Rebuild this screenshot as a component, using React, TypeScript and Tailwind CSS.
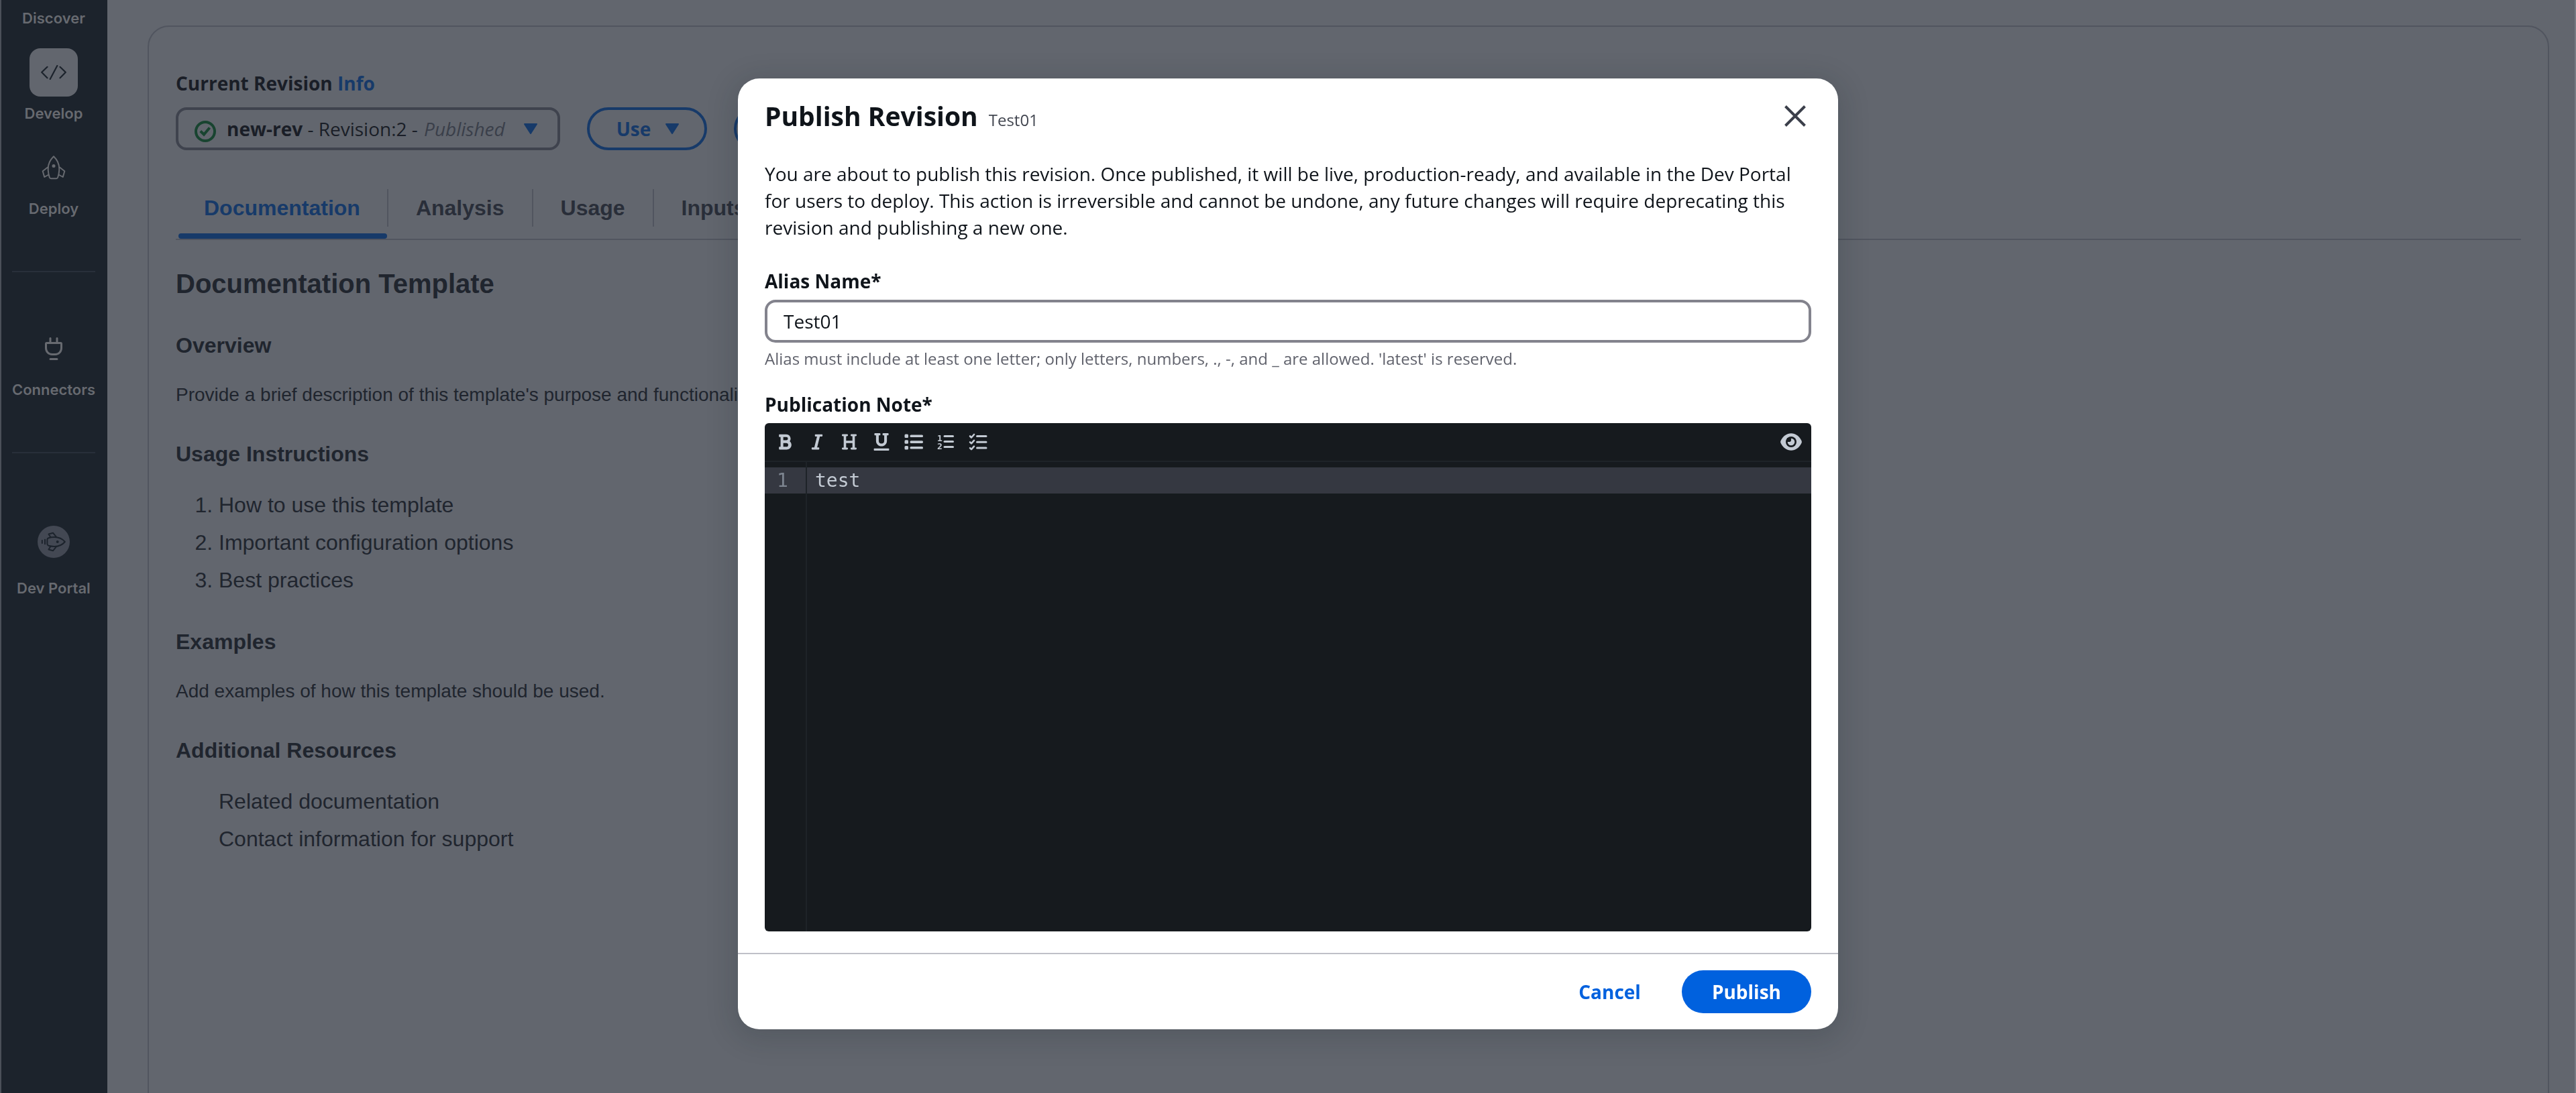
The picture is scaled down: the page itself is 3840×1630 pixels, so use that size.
import React from 'react';
import { FaBold, FaItalic, FaUnderline } from 'react-icons/fa';
import { clsx } from 'clsx';

const tabs = ['Documentation', 'Analysis', 'Usage', 'Inputs'];

function CodeIcon() {
  return (
    <svg width="38" height="22" viewBox="0 0 38 22" fill="none" stroke="#1c232c" strokeWidth="2.2" strokeLinecap="round" strokeLinejoin="round">
      <path d="M9.5 2.8 1.2 10.8l8.3 8.4M28.5 2.8l8.3 8-8.3 8.4M24.3 1 13.7 21" />
    </svg>
  );
}

function RocketIcon() {
  return (
    <svg width="36" height="36" viewBox="0 0 36 36" fill="none" stroke="currentColor" strokeWidth="2" strokeLinejoin="round">
      <path d="M18 1.2C13 6 9.7 12 9.7 19.5c0 5 .9 9.5 2 12.8.4 1.2 1.2 1.9 2.3 1.9h8c1.1 0 1.9-.7 2.3-1.9 1.1-3.3 2-7.8 2-12.8C26.3 12 23 6 18 1.2Z" />
      <path d="M9.7 17 1.7 23.2 4.2 32l6.3-3.5M26.3 17l8 6.2-2.5 8.8-6.3-3.5" />
      <circle cx="18" cy="15.4" r="2.5" fill="currentColor" stroke="none" />
    </svg>
  );
}

function PlugIcon() {
  return (
    <svg width="28" height="34" viewBox="0 0 28 34" fill="none" stroke="currentColor" strokeWidth="3" strokeLinecap="round" strokeLinejoin="round">
      <path d="M9 1.5V8M19 1.5V8M3.500 8.500h21a1 1 0 0 1 1 1v6.500c0 5.500-4 9.500-9 9.500h-5c-5 0-9-4-9-9.500V9.500a1 1 0 0 1 1-1ZM9 32.400h10" />
    </svg>
  );
}

function PortalIcon() {
  return (
    <svg width="48" height="48" viewBox="0 0 48 48" fill="none" stroke="#1c232c" strokeWidth="2" strokeLinecap="round" strokeLinejoin="round">
      <circle cx="24" cy="24" r="24" fill="#434853" stroke="none" />
      <path d="M40.8 24C37 19.5 31.5 17 25 17c-3 0-6 .4-8.6 1.2-1.4.5-2 1.3-2 2.500v6.600c0 1.200.6 2 2 2.500C19 30.600 22 31 25 31c6.500 0 12-2.500 15.800-7Z" />
      <path d="m19.300 17-2.800-4.500 6.500-1.800 4.800 6M19.300 31l-2.800 4.500 6.500 1.800 4.800-6M11 20.700v6.600M6.800 22v4" />
      <circle cx="29.7" cy="24" r="2" fill="#1c232c" stroke="none" />
    </svg>
  );
}

function CheckCircle() {
  return (
    <svg className="mt-2 shrink-0" width="32" height="32" viewBox="0 0 32 32" fill="none" stroke="#184430" strokeWidth="4">
      <circle cx="16" cy="16" r="14" />
      <path d="m8.800 15.500 5.200 5L22.500 10.500" />
    </svg>
  );
}

function Caret() {
  return (
    <svg className="shrink-0" width="32" height="32" viewBox="0 0 32 32" fill="#173a69" stroke="#173a69" strokeWidth="2" strokeLinejoin="round">
      <path d="M7 9h18l-9 14Z" />
    </svg>
  );
}

function HeadingIcon() {
  return (
    <svg width="24" height="26" viewBox="0 0 24 26" fill="none" stroke="currentColor" strokeWidth="3.6">
      <path d="M5.500 3v20M18.500 3v20M5.500 13h13" />
      <path strokeWidth="2.800" strokeLinecap="round" d="M2.300 3h6.400M15.300 3h6.400M2.300 23h6.400M15.300 23h6.400" />
    </svg>
  );
}

function BulletListIcon() {
  return (
    <svg width="28" height="26" viewBox="0 0 28 26" fill="currentColor">
      {[1.5, 10.3, 19].map((y) => (
        <React.Fragment key={y}>
          <rect x="0.5" y={y} width="5.5" height="5.5" rx="1.5" />
          <rect x="8.5" y={y + 1} width="19.5" height="3.6" rx="1.6" />
        </React.Fragment>
      ))}
    </svg>
  );
}

function NumberListIcon() {
  return (
    <svg width="26" height="26" viewBox="0 0 26 26" fill="currentColor">
      <text x="0" y="11.5" fontSize="13" fontWeight="700" fontFamily="DejaVu Sans Mono, monospace">1</text>
      <text x="0" y="24" fontSize="13" fontWeight="700" fontFamily="DejaVu Sans Mono, monospace">2</text>
      <rect x="9.5" y="3" width="15.5" height="3" rx="1.5" />
      <rect x="9.5" y="11" width="15.5" height="3" rx="1.5" />
      <rect x="9.5" y="19" width="15.5" height="3" rx="1.5" />
    </svg>
  );
}

function TodoListIcon() {
  return (
    <svg width="28" height="26" viewBox="0 0 28 26" fill="none" stroke="currentColor" strokeWidth="3" strokeLinecap="round" strokeLinejoin="round">
      <path strokeWidth="2.6" d="m2 4.500 2 2L8 2M2 13.300l2 2 4-4.500M2 22.100l2 2 4-4.500" />
      <path d="M12.500 4.500h13.500M12.500 13.300h13.500M12.500 22.100h13.500" />
    </svg>
  );
}

function EyeIcon() {
  return (
    <svg width="32" height="26" viewBox="0 0 32 26">
      <path fill="#c3cad3" d="M16 0.200c6.500 0 12.300 4.200 15.600 11.300.4 1 .4 2 0 3C28.300 21.600 22.500 25.800 16 25.800S3.700 21.600.4 14.500c-.4-1-.4-2 0-3C3.700 4.400 9.500.2 16 .2Z" />
      <circle cx="16" cy="13" r="8" fill="#161a1e" />
      <circle cx="16" cy="13" r="5.3" fill="#c3cad3" />
      <path fill="#161a1e" d="M10 13V7h6v3.500c0 1.400-1.100 2.500-2.500 2.500Z" />
    </svg>
  );
}

const tools = [
  { label: 'Bold', icon: <FaBold size={26} /> },
  { label: 'Italic', icon: <FaItalic size={26} /> },
  { label: 'Heading', icon: <HeadingIcon /> },
  { label: 'Underline', icon: <FaUnderline size={26} /> },
  { label: 'Bulleted list', icon: <BulletListIcon /> },
  { label: 'Numbered list', icon: <NumberListIcon /> },
  { label: 'Todo list', icon: <TodoListIcon /> },
];

function NavItem({ label, icon, active }: { label: string; icon: React.ReactNode; active?: boolean }) {
  return (
    <a href="#" className="flex flex-col items-center gap-[10px] text-[#676a70]">
      <span className={clsx('flex size-[72px] items-center justify-center rounded-2xl', active && 'bg-[#62666e]')}>
        {icon}
      </span>
      <span className="text-[22px] leading-[30px] font-semibold">{label}</span>
    </a>
  );
}

function Sidebar() {
  return (
    <nav className="flex w-[160px] shrink-0 flex-col bg-[#1c232c] pt-3 font-['Inter',sans-serif] shadow-[inset_2px_0_0_#4b5059]">
      <div className="flex flex-col gap-[30px]">
        <a href="#" className="text-center text-[22px] leading-[30px] font-semibold text-[#676a70]">Discover</a>
        <NavItem label="Develop" icon={<CodeIcon />} active />
        <NavItem label="Deploy" icon={<RocketIcon />} />
      </div>
      <hr className="mx-[18px] my-[78px] border-t-2 border-[#282f3a]" />
      <NavItem label="Connectors" icon={<PlugIcon />} />
      <hr className="mx-[18px] my-[78px] border-t-2 border-[#282f3a]" />
      <a href="#" className="flex flex-col items-center gap-[30px] pt-[30px] text-[#676a70]">
        <PortalIcon />
        <span className="text-[22px] leading-[30px] font-semibold">Dev Portal</span>
      </a>
    </nav>
  );
}

function RevisionPage() {
  return (
    <main className="min-w-0 flex-1 border-r-2 border-[#777a82] pt-[38px] pr-[38px] pl-[60px]">
      <div className="min-h-screen rounded-[32px] border-2 border-[#51555f] px-10 pt-16">
        <p className="text-[28px] leading-10 font-bold text-[#1a1e27]">
          Current Revision <a href="#" className="text-[#173a69]">Info</a>
        </p>

        <div className="mt-4 flex gap-10 text-[28px] leading-10 whitespace-nowrap">
          <button className="flex h-16 items-center gap-4 rounded-2xl border-4 border-[#3f434e] px-6 text-[#1a1e27]">
            <CheckCircle />
            <span><b>new-rev</b> - Revision:2 - <i className="pr-1.5 pl-0.5 text-[#3a3f4a]">Published</i></span>
            <Caret />
          </button>
          <button className="flex h-16 items-center gap-4 rounded-[32px] border-4 border-[#173a69] pr-8 pl-10 font-bold text-[#173a69]">
            Use
            <Caret />
          </button>
          <button aria-label="More actions" className="flex h-16 items-center rounded-[32px] border-4 border-[#173a69] px-16">
            <Caret />
          </button>
        </div>

        <div className="font-['Liberation_Sans',Arial,sans-serif] text-[#20252e]">
          <div role="tablist" className="mt-[58px] flex border-b-2 border-[#51555f] pl-1">
            {tabs.map((tab, i) => (
              <button key={tab} role="tab" aria-selected={i === 0} className="flex flex-col text-[32px] leading-10 font-bold">
                <span
                  className={clsx(
                    'flex h-14 items-center border-r-2 border-[#51555f]',
                    i === 0 ? 'pr-10 pl-[38px] text-[#173a69]' : 'px-[41px] text-[#292e39]'
                  )}
                >
                  {tab}
                </span>
                <span className={clsx('mt-[10px] mr-0.5 h-2 self-stretch rounded-sm', i === 0 && 'bg-[#173a69]')} />
              </button>
            ))}
          </div>

          <h1 className="mt-[41px] text-[40px] leading-[48px] font-bold">Documentation Template</h1>
          <h2 className="mt-12 text-[32px] leading-10 font-bold">Overview</h2>
          <p className="mt-[34px] text-[28px] leading-10">
            Provide a brief description of this template's purpose and functionality.
          </p>
          <h2 className="mt-12 text-[32px] leading-10 font-bold">Usage Instructions</h2>
          <ol className="mt-7 list-decimal pl-16 text-[32px] leading-[56px]">
            <li>How to use this template</li>
            <li>Important configuration options</li>
            <li>Best practices</li>
          </ol>
          <h2 className="mt-11 text-[32px] leading-10 font-bold">Examples</h2>
          <p className="mt-[34px] text-[28px] leading-10">Add examples of how this template should be used.</p>
          <h2 className="mt-12 text-[32px] leading-10 font-bold">Additional Resources</h2>
          <ul className="mt-7 pl-16 text-[32px] leading-[56px]">
            <li>Related documentation</li>
            <li>Contact information for support</li>
          </ul>
        </div>
      </div>
    </main>
  );
}

function NoteEditor() {
  return (
    <div className="mt-2 overflow-hidden rounded-md bg-[#161a1e] text-[#c3cad3]">
      <div className="flex items-center justify-between border-b-2 border-[#1e2328] px-[6px]">
        <div className="flex">
          {tools.map((tool) => (
            <button key={tool.label} type="button" aria-label={tool.label} className="flex h-14 w-12 items-center justify-center">
              {tool.icon}
            </button>
          ))}
        </div>
        <button type="button" aria-label="Preview" className="flex h-14 w-12 items-center justify-center">
          <EyeIcon />
        </button>
      </div>
      <div className="relative flex h-[700px] font-['DejaVu_Sans_Mono',monospace] text-[28px] leading-[39px]">
        {/* active line */}
        <div className="absolute inset-x-0 top-2 h-[39px] bg-[#353841]" />
        <div className="relative w-[63px] shrink-0 border-r-2 border-[#1e2328] pt-2 pl-[18px] text-[#7d8590]">1</div>
        <textarea
          id="note"
          defaultValue="test"
          className="relative flex-1 resize-none bg-transparent pt-2 pl-3 outline-none"
        />
      </div>
    </div>
  );
}

function PublishModal() {
  return (
    <div className="fixed inset-0 flex items-start justify-center pt-[117px]">
      <form
        role="dialog"
        aria-labelledby="publish-title"
        className="w-[1640px] max-w-full rounded-[32px] bg-white text-[28px] leading-10 text-[#0f141a] shadow-[0_8px_40px_8px_rgba(20,30,35,0.16)]"
      >
        <header className="flex items-center justify-between px-10 pt-8 pb-[42px]">
          <div className="flex items-baseline gap-4">
            <h2 id="publish-title" className="text-[39px] leading-[48px] font-bold">Publish Revision</h2>
            <span className="text-2xl text-[#424650]">Test01</span>
          </div>
          <button type="button" aria-label="Close" className="p-2">
            <svg width="32" height="32" viewBox="0 0 32 32" stroke="#3b3f4a" strokeWidth="4">
              <path d="m1.500 1.500 29 29M30.500 1.500l-29 29" />
            </svg>
          </button>
        </header>

        <div className="px-10 pb-8">
          <p>
            You are about to publish this revision. Once published, it will be live, production-ready, and available in the Dev Portal
            for users to deploy. This action is irreversible and cannot be undone, any future changes will require deprecating this
            revision and publishing a new one.
          </p>
          <label htmlFor="alias" className="mt-10 block font-bold">Alias Name*</label>
          <input
            id="alias"
            type="text"
            defaultValue="Test01"
            className="mt-2 block h-16 w-full rounded-2xl border-4 border-[#83838d] px-6 outline-none"
          />
          <p className="mt-2 text-2xl leading-8 text-[#60626c]">
            Alias must include at least one letter; only letters, numbers, ., -, and _ are allowed. 'latest' is reserved.
          </p>
          <label htmlFor="note" className="mt-8 block font-bold">Publication Note*</label>
          <NoteEditor />
        </div>

        <footer className="flex justify-end gap-4 border-t-2 border-[#bfc0c8] px-10 py-6 font-bold">
          <button type="button" className="h-16 px-[45px] text-[#0061de]">Cancel</button>
          <button type="button" className="h-16 rounded-[32px] bg-[#0061de] px-[45px] text-white">Publish</button>
        </footer>
      </form>
    </div>
  );
}

export default function App() {
  return (
    <div className="flex h-screen overflow-hidden bg-[#62666e] font-['Open_Sans',sans-serif]">
      <Sidebar />
      <RevisionPage />
      <PublishModal />
    </div>
  );
}
